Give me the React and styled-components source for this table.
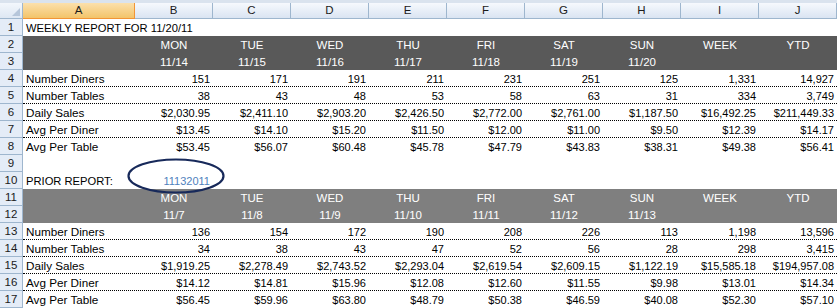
import styled, { createGlobalStyle } from "styled-components";

const GlobalStyle = createGlobalStyle`
  html, body {
    margin: 0;
    padding: 0;
    background: #fff;
  }
  body {
    font-family: "Liberation Sans", Arial, sans-serif;
    color: #000;
  }
`

const COLS = ["A", "B", "C", "D", "E", "F", "G", "H", "I", "J"];

const current = {
  days: [["MON", "11/14"], ["TUE", "11/15"], ["WED", "11/16"], ["THU", "11/17"], ["FRI", "11/18"], ["SAT", "11/19"], ["SUN", "11/20"], ["WEEK", ""], ["YTD", ""]],
  rows: [
    ["Number Diners", ["151", "171", "191", "211", "231", "251", "125", "1,331", "14,927"]],
    ["Number Tables", ["38", "43", "48", "53", "58", "63", "31", "334", "3,749"]],
    ["Daily Sales", ["$2,030.95", "$2,411.10", "$2,903.20", "$2,426.50", "$2,772.00", "$2,761.00", "$1,187.50", "$16,492.25", "$211,449.33"]],
    ["Avg Per Diner", ["$13.45", "$14.10", "$15.20", "$11.50", "$12.00", "$11.00", "$9.50", "$12.39", "$14.17"]],
    ["Avg Per Table", ["$53.45", "$56.07", "$60.48", "$45.78", "$47.79", "$43.83", "$38.31", "$49.38", "$56.41"]],
  ],
}

const prior = {
  days: [["MON", "11/7"], ["TUE", "11/8"], ["WED", "11/9"], ["THU", "11/10"], ["FRI", "11/11"], ["SAT", "11/12"], ["SUN", "11/13"], ["WEEK", ""], ["YTD", ""]],
  rows: [
    ["Number Diners", ["136", "154", "172", "190", "208", "226", "113", "1,198", "13,596"]],
    ["Number Tables", ["34", "38", "43", "47", "52", "56", "28", "298", "3,415"]],
    ["Daily Sales", ["$1,919.25", "$2,278.49", "$2,743.52", "$2,293.04", "$2,619.54", "$2,609.15", "$1,122.19", "$15,585.18", "$194,957.08"]],
    ["Avg Per Diner", ["$14.12", "$14.81", "$15.96", "$12.08", "$12.60", "$11.55", "$9.98", "$13.01", "$14.34"]],
    ["Avg Per Table", ["$56.45", "$59.96", "$63.80", "$48.79", "$50.38", "$46.59", "$40.08", "$52.30", "$57.10"]],
  ],
}

export default function App() {
  let n = 0;
  const next = () => ++n;

  const block = (data, band) => [
    <Row key={"d" + n}>
      <RowNum>{next()}</RowNum>
      <RowBody $band={band}>
        <Cell />
        {data.days.map((d) => <HeadCell key={d[0]}>{d[0]}</HeadCell>)}
      </RowBody>
    </Row>,
    <Row key={"t" + n}>
      <RowNum>{next()}</RowNum>
      <RowBody $band={band}>
        <Cell />
        {data.days.map((d) => <HeadCell key={d[0]}>{d[1]}</HeadCell>)}
      </RowBody>
    </Row>,
    ...data.rows.map((r, idx) => (
      <Row key={r[0] + n}>
        <RowNum>{next()}</RowNum>
        <RowBody $dotted={idx < data.rows.length - 1}>
          <Label>{r[0]}</Label>
          {r[1].map((v, i) => <Num key={i}>{v}</Num>)}
        </RowBody>
      </Row>
    )),
  ]

  return (
    <Sheet>
      <GlobalStyle />
      <TopStrip />
      <ColHeader>
        <Corner />
        {COLS.map((c) => <ColCell key={c} $selected={c === "A"}>{c}</ColCell>)}
      </ColHeader>

      <Row>
        <RowNum>{next()}</RowNum>
        <RowBody>
          <Title>WEEKLY REPORT FOR 11/20/11</Title>
        </RowBody>
      </Row>

      {block(current, "#595959")}

      <Row>
        <RowNum>{next()}</RowNum>
        <RowBody />
      </Row>
      <Row>
        <RowNum>{next()}</RowNum>
        <RowBody>
          <Title>PRIOR REPORT:</Title>
          <Num $link>11132011</Num>
        </RowBody>
      </Row>

      {block(prior, "#7f7f7f")}

      <Circle width="98" height="36" viewBox="0 0 98 36">
        <ellipse cx="49" cy="18" rx="47.5" ry="16.5" fill="none" stroke="#17295a" strokeWidth="2.2" />
      </Circle>
    </Sheet>
  )
}

const Sheet = styled.div`
  position: relative;
  width: 837px;
  height: 308px;
  overflow: hidden;
  font-size: 11px;
`

const TopStrip = styled.div`
  height: 3px;
  background: #dae3ee;
`

const ColHeader = styled.div`
  display: grid;
  grid-template-columns: 23px 112px repeat(9, 78px);
  height: 16px;
`

const Corner = styled.div`
  position: relative;
  box-sizing: border-box;
  background: linear-gradient(#f3f7fc, #dde7f3);
  border-right: 1px solid #9eb6ce;
  border-bottom: 1px solid #9eb6ce;
  &::after {
    content: "";
    position: absolute;
    right: 2px;
    bottom: 2px;
    border-left: 8px solid transparent;
    border-bottom: 8px solid #b6c6da;
  }
`

const ColCell = styled.div`
  box-sizing: border-box;
  text-align: center;
  font-size: 11.5px;
  line-height: 15px;
  color: #1b1b1b;
  background: ${(p) => p.$selected ? "linear-gradient(#fbe0ac, #f3c46a)" : "linear-gradient(#f6f9fd, #dae4f2)"};
  border-right: 1px solid ${(p) => p.$selected ? "#f29536" : "#9eb6ce"};
  border-bottom: 1px solid ${(p) => p.$selected ? "#f29536" : "#9eb6ce"};
`

const Row = styled.div`
  display: flex;
  height: 17px;
`

const RowNum = styled.div`
  width: 23px;
  flex: none;
  box-sizing: border-box;
  background: #e4ecf7;
  border-right: 1px solid #9eb6ce;
  border-bottom: 1px solid #9eb6ce;
  text-align: center;
  font-size: 11.5px;
  line-height: 17px;
  color: #1b1b1b;
`

const RowBody = styled.div`
  flex: 1;
  box-sizing: border-box;
  display: grid;
  grid-template-columns: 112px repeat(9, 78px);
  background: ${(p) => p.$band || "#fff"};
  border-bottom: 1px ${(p) => p.$dotted ? "dotted #000" : "solid transparent"};
  padding-top: 2px;
  line-height: 14px;
  white-space: nowrap;
`

const Cell = styled.div``

const HeadCell = styled.div`
  text-align: center;
  color: #fff;
  font-size: 11.5px;
`

const Label = styled.div`
  padding-left: 3px;
  font-size: 11.7px;
`

const Title = styled.div`
  padding-left: 3px;
  font-size: 11.2px;
`

const Num = styled.div`
  text-align: right;
  padding-right: 3px;
  font-size: 11px;
  color: ${(p) => p.$link ? "#4f81bd" : "#000"};
`

const Circle = styled.svg`
  position: absolute;
  left: 127px;
  top: 158px;
  pointer-events: none;
`
